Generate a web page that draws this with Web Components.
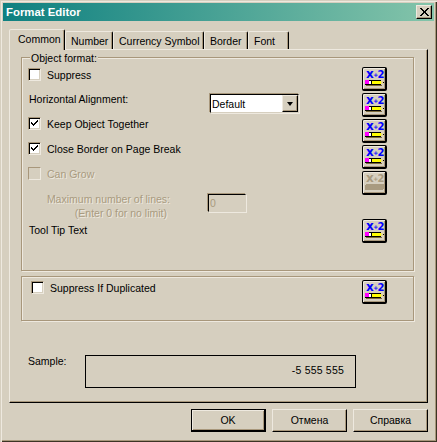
<!DOCTYPE html>
<html>
<head>
<meta charset="utf-8">
<title>Format Editor</title>
<style>
    html, body { margin: 0; padding: 0; background: #d6cfbf; }
    body { font: 10.5px/13px "Liberation Sans", Arial, sans-serif; color: #000; }
</style>
</head>
<body>
<format-editor></format-editor>
<script>
const FACE = '#d6cfbf';
const LIGHT = '#eee9df';
const SHADOW = '#a8977b';
const GREY = '#a99b80';

class WinCheck extends HTMLElement {
    constructor() {
        super();
        this.attachShadow({ mode: 'open' });
    }

    connectedCallback() {
        const mark = this.hasAttribute('checked')
            ? '<svg width="7" height="7" viewBox="0 0 7 7" shape-rendering="crispEdges"><path d="M0 2h1v1h1v1h1V3h1V2h1V1h1V0h1v2H6v1H5v1H4v1H3v1H2V5H1V4H0z" fill="#000"/></svg>'
            : '';
        this.shadowRoot.innerHTML = `
            <style>
                :host { display: flex; align-items: flex-start; height: 13px; }
                .box {
                    box-sizing: border-box;
                    width: 13px;
                    height: 13px;
                    margin-right: 6px;
                    display: flex;
                    align-items: center;
                    justify-content: center;
                    background: #fff;
                    border: 1px solid;
                    border-color: ${SHADOW} ${LIGHT} ${LIGHT} ${SHADOW};
                    box-shadow: inset 1px 1px 0 #000, inset -1px -1px 0 ${FACE};
                    flex: none;
                }
                .label { padding-top: 1px; }
                :host([disabled]) .box { background: ${FACE}; box-shadow: none; }
                :host([disabled]) { color: ${GREY}; text-shadow: 1px 1px 0 ${LIGHT}; }
            </style>
            <div class="box">${mark}</div><div class="label"><slot></slot></div>
        `;
    }
}

class FxButton extends HTMLElement {
    constructor() {
        super();
        this.attachShadow({ mode: 'open' });
    }

    connectedCallback() {
        const off = this.hasAttribute('disabled');
        const ink = off ? GREY : '#0000ff';
        const pencil = off
            ? `<rect x="2" y="12" width="19" height="6" rx="2" fill="${GREY}"/>`
            : `<rect x="3" y="17" width="16" height="1" fill="#7c6a3a"/>
               <rect x="2" y="12" width="4" height="5" fill="#ff00ff"/>
               <rect x="6" y="12" width="2" height="5" fill="#fff"/>
               <rect x="8" y="12" width="1" height="5" fill="#000"/>
               <rect x="9" y="12" width="9" height="5" fill="#ffff00"/>
               <rect x="6" y="12" width="12" height="1" fill="#000"/>
               <rect x="2" y="16" width="16" height="1" fill="#000"/>
               <rect x="18" y="13" width="2" height="3" fill="#e8d890"/>
               <rect x="20" y="14" width="1" height="1" fill="#000"/>`;
        this.shadowRoot.innerHTML = `
            <style>
                :host {
                    display: block;
                    box-sizing: border-box;
                    width: 25px;
                    height: 24px;
                    background: ${FACE};
                    border: 1px solid #000;
                    border-right-width: 2px;
                    border-bottom-width: 2px;
                    border-radius: 2px;
                    box-shadow: inset 1px 1px 0 ${LIGHT}, inset -1px -1px 0 ${SHADOW};
                }
                svg { display: block; }
            </style>
            <svg width="23" height="22" viewBox="0 0 23 22">
                <text x="3" y="10" letter-spacing="-0.6" font-family="DejaVu Sans" font-weight="700" font-size="10" fill="${ink}"><tspan font-size="12">x</tspan><tspan font-size="6" dy="-1">+</tspan><tspan dy="1">2</tspan></text>
                <g shape-rendering="crispEdges">${pencil}</g>
            </svg>
        `;
    }
}

class WinButton extends HTMLElement {
    constructor() {
        super();
        this.attachShadow({ mode: 'open' });
        this.shadowRoot.innerHTML = `
            <style>
                :host {
                    display: flex;
                    align-items: center;
                    justify-content: center;
                    box-sizing: border-box;
                    width: 75px;
                    height: 23px;
                    background: ${FACE};
                    border: 1px solid;
                    border-color: ${LIGHT} #000 #000 ${LIGHT};
                    box-shadow: inset -1px -1px 0 ${SHADOW};
                }
                :host([default]) {
                    border: 1px solid #000;
                    border-right-width: 2px;
                    border-bottom-width: 2px;
                    box-shadow: inset 1px 1px 0 ${LIGHT}, inset -1px -1px 0 ${SHADOW};
                }
            </style>
            <slot></slot>
        `;
    }
}

class WinSelect extends HTMLElement {
    constructor() {
        super();
        this.attachShadow({ mode: 'open' });
        this.shadowRoot.innerHTML = `
            <style>
                :host {
                    display: flex;
                    box-sizing: border-box;
                    width: 89px;
                    height: 19px;
                    background: #fff;
                    border: 1px solid;
                    border-color: #000 ${FACE} ${FACE} #000;
                    box-shadow: -1px -1px 0 ${SHADOW}, 1px 1px 0 ${LIGHT};
                    margin: 1px;
                }
                .value { flex: 1; padding: 3px 0 0 1px; }
                .arrow {
                    width: 16px;
                    box-sizing: border-box;
                    background: ${FACE};
                    border: 1px solid;
                    border-color: ${LIGHT} #000 #000 ${LIGHT};
                    box-shadow: inset -1px -1px 0 ${SHADOW};
                    display: flex;
                    align-items: center;
                    justify-content: center;
                }
                .arrow i {
                    width: 0;
                    height: 0;
                    border: 3px solid transparent;
                    border-top: 4px solid #000;
                    border-bottom: 0;
                }
            </style>
            <div class="value"><slot></slot></div>
            <div class="arrow"><i></i></div>
        `;
    }
}

class WinGroup extends HTMLElement {
    constructor() {
        super();
        this.attachShadow({ mode: 'open' });
        this.shadowRoot.innerHTML = `
            <style>
                :host {
                    display: flex;
                    position: relative;
                    box-sizing: border-box;
                    width: 393px;
                    border: 1px solid ${SHADOW};
                    box-shadow: 1px 1px 0 ${LIGHT}, inset 1px 1px 0 ${LIGHT};
                    padding: 9px 25px 0 6px;
                }
                .legend {
                    position: absolute;
                    left: 8px;
                    top: -6px;
                    padding: 0 1px;
                    background: ${FACE};
                }
                .legend:empty { display: none; }
            </style>
            <div class="legend"></div>
            <slot></slot>
        `;
    }

    connectedCallback() {
        this.shadowRoot.querySelector('.legend').textContent = this.getAttribute('legend') || '';
    }
}

class FormatEditor extends HTMLElement {
    constructor() {
        super();
        this.attachShadow({ mode: 'open' });
    }

    connectedCallback() {
        this.shadowRoot.innerHTML = `
            <style>
                :host {
                    display: flex;
                    flex-direction: column;
                    box-sizing: border-box;
                    width: 437px;
                    height: 442px;
                    padding: 3px;
                    background: ${FACE};
                    box-shadow: inset 1px 1px 0 ${FACE}, inset 2px 2px 0 ${LIGHT}, inset -1px -1px 0 #3c3424, inset -2px -2px 0 ${SHADOW};
                }
                .title {
                    flex: none;
                    display: flex;
                    align-items: center;
                    justify-content: space-between;
                    height: 18px;
                    padding: 0 2px 0 3px;
                    background: linear-gradient(90deg, #0e8080, #84c4aa);
                    color: #fff;
                    font: 700 11.4px/13px "Liberation Sans", Arial, sans-serif;
                }
                .close {
                    box-sizing: border-box;
                    width: 16px;
                    height: 14px;
                    background: ${FACE};
                    border: 1px solid;
                    border-color: ${LIGHT} #000 #000 ${LIGHT};
                    box-shadow: inset -1px -1px 0 ${SHADOW};
                }
                .close svg { display: block; margin: 2px 0 0 3px; }
                .tabs {
                    flex: none;
                    display: flex;
                    align-items: flex-end;
                    height: 20px;
                    margin: 8px 0 0 6px;
                    position: relative;
                    z-index: 1;
                }
                .tab {
                    box-sizing: border-box;
                    height: 18px;
                    padding: 3px 0 0 5px;
                    border: 1px solid;
                    border-bottom: 0;
                    border-color: ${LIGHT} #000 transparent ${LIGHT};
                    border-radius: 2px 2px 0 0;
                    box-shadow: inset -1px 0 0 ${SHADOW};
                }
                .tab.active {
                    height: 21px;
                    margin-bottom: -1px;
                    background: ${FACE};
                    padding-left: 8px;
                }
                .pane {
                    flex: none;
                    box-sizing: border-box;
                    width: 419px;
                    height: 354px;
                    margin-left: 6px;
                    padding: 7px 0 0 11px;
                    border: 1px solid;
                    border-color: ${LIGHT} #000 #000 ${LIGHT};
                    box-shadow: inset -1px -1px 0 ${SHADOW};
                }
                .left { flex: none; width: 334px; display: flex; flex-direction: column; }
                .right { flex: none; width: 25px; display: flex; flex-direction: column; gap: 2px; }
                .main { height: 214px; }
                .dup { height: 45px; margin-top: 5px; padding-top: 3px; }
                .dup .left { padding: 1px 0 0 3px; width: 331px; }
                .select-row { display: flex; justify-content: space-between; margin-top: 12px; height: 24px; }
                .m1 { margin-top: 1px; }
                .m3 { margin-top: 12px; }
                .m4 { margin-top: 12px; }
                .limit { display: flex; margin-top: 13px; height: 23px; }
                .limit .text { width: 142px; margin-top: -1px; text-align: right; color: ${GREY}; text-shadow: 1px 1px 0 ${LIGHT}; line-height: 14px; }
                .limit .text span { display: block; }
                .input {
                    box-sizing: border-box;
                    width: 38px;
                    height: 18px;
                    margin: 1px 0 0 38px;
                    padding: 2px 0 0 1px;
                    color: ${GREY};
                    border: 1px solid;
                    border-color: #000 ${FACE} ${FACE} #000;
                    box-shadow: -1px -1px 0 ${SHADOW}, 1px 1px 0 ${LIGHT};
                }
                .tip { margin-top: 8px; margin-left: 1px; }
                .spacer { height: 20px; flex: none; }
                .sample { display: flex; margin: 34px 0 0 7px; }
                .sample .lbl { width: 57px; }
                .sample .val {
                    box-sizing: border-box;
                    width: 271px;
                    height: 33px;
                    border: 1px solid #000;
                    padding: 8px 11px 0 0;
                    text-align: right;
                    letter-spacing: 0.2px;
                }
                .footer {
                    flex: none;
                    display: flex;
                    justify-content: flex-end;
                    gap: 6px;
                    width: 425px;
                    margin-top: 6px;
                }
            </style>
            <div class="title">
                <span>Format Editor</span>
                <div class="close"><svg width="9" height="8" viewBox="0 0 9 8" shape-rendering="crispEdges"><path d="M0 0h2l2 3h1l2-3h2L6 4l3 4H7L5 5H4L2 8H0l3-4z" fill="#000"/></svg></div>
            </div>
            <div class="tabs">
                <div class="tab active" style="width:56px">Common</div>
                <div class="tab" style="width:48px">Number</div>
                <div class="tab" style="width:91px">Currency Symbol</div>
                <div class="tab" style="width:44px">Border</div>
                <div class="tab" style="width:41px">Font</div>
            </div>
            <div class="pane">
                <win-group class="main" legend="Object format:">
                    <div class="left">
                        <win-check class="m1">Suppress</win-check>
                        <div class="select-row">
                            <span style="margin-left:1px">Horizontal Alignment:</span>
                            <win-select style="margin-right:63px">Default</win-select>
                        </div>
                        <win-check checked>Keep Object Together</win-check>
                        <win-check class="m3" checked>Close Border on Page Break</win-check>
                        <win-check class="m4" disabled>Can Grow</win-check>
                        <div class="limit">
                            <div class="text"><span>Maximum number of lines:</span><span style="padding-right:3px">(Enter 0 for no limit)</span></div>
                            <div class="input">0</div>
                        </div>
                        <div class="tip">Tool Tip Text</div>
                    </div>
                    <div class="right">
                        <fx-button></fx-button>
                        <fx-button></fx-button>
                        <fx-button></fx-button>
                        <fx-button></fx-button>
                        <fx-button disabled></fx-button>
                        <div class="spacer"></div>
                        <fx-button></fx-button>
                    </div>
                </win-group>
                <win-group class="dup">
                    <div class="left"><win-check>Suppress If Duplicated</win-check></div>
                    <div class="right"><fx-button></fx-button></div>
                </win-group>
                <div class="sample">
                    <div class="lbl">Sample:</div>
                    <div class="val">-5 555 555</div>
                </div>
            </div>
            <div class="footer">
                <win-button default>OK</win-button>
                <win-button>Отмена</win-button>
                <win-button>Справка</win-button>
            </div>
        `;
    }
}

customElements.define('win-check', WinCheck);
customElements.define('fx-button', FxButton);
customElements.define('win-button', WinButton);
customElements.define('win-select', WinSelect);
customElements.define('win-group', WinGroup);
customElements.define('format-editor', FormatEditor);
</script>
</body>
</html>
